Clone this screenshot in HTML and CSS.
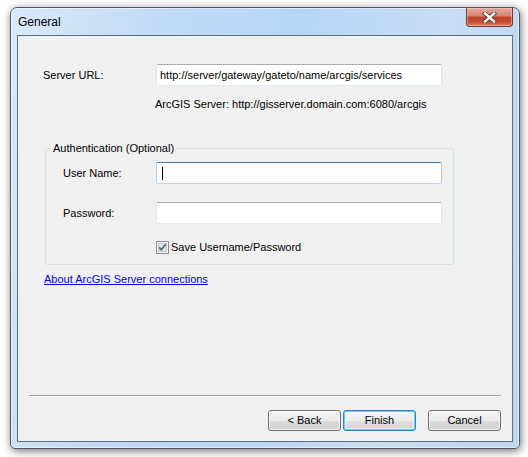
FILE: index.html
```html
<!DOCTYPE html>
<html>
<head>
<meta charset="utf-8">
<title>General</title>
<link rel="stylesheet" href="styles.css">
</head>
<body>
<div class="window">
  <div class="titlebar">
    <span class="title">General</span>
    <div class="close">
      <svg width="17" height="11" viewBox="0 0 17 11">
        <path d="M4 1.5 L13 9.5 M13 1.5 L4 9.5" stroke="#4a3a3a" stroke-width="4.2" stroke-linecap="square" fill="none"/>
        <path d="M4 1.5 L13 9.5 M13 1.5 L4 9.5" stroke="#ffffff" stroke-width="2.4" stroke-linecap="square" fill="none"/>
      </svg>
    </div>
  </div>
  <div class="client">
    <div class="content">
      <div class="row url-row">
        <span class="lbl">Server URL:</span>
        <div class="textbox">http://server/gateway/gateto/name/arcgis/services</div>
      </div>
      <div class="hint">ArcGIS Server: http://gisserver.domain.com:6080/arcgis</div>
      <fieldset class="group">
        <legend>Authentication (Optional)</legend>
        <div class="row grow user-row">
          <span class="lbl">User Name:</span>
          <div class="textbox focus"><span class="caret"></span></div>
        </div>
        <div class="row grow pass-row">
          <span class="lbl">Password:</span>
          <div class="textbox"></div>
        </div>
        <div class="check-row">
          <span class="checkbox">
            <svg width="13" height="13" viewBox="0 0 13 13">
              <rect x="0.5" y="0.5" width="12" height="12" fill="#f4f4f4" stroke="#8e8f8f"/>
              <rect x="2.5" y="2.5" width="8" height="8" fill="#e4e4e4" stroke="#c8c8c8"/>
              <path d="M3.2 6.4 L5.3 8.8 L9.8 3.2" stroke="#4c6286" stroke-width="1.7" fill="none"/>
            </svg>
          </span>
          <span class="check-label">Save Username/Password</span>
        </div>
      </fieldset>
      <a class="link" href="#">About ArcGIS Server connections</a>
    </div>
    <div class="footer">
      <div class="sep"></div>
      <div class="buttons">
        <div class="btn">&lt; Back</div>
        <div class="btn default">Finish</div>
        <div class="btn cancel">Cancel</div>
      </div>
    </div>
  </div>
</div>
</body>
</html>
```

FILE: styles.css
```css
html, body {
  margin: 0;
  padding: 0;
  background: #ffffff;
}

body {
  width: 528px;
  height: 457px;
  overflow: hidden;
  font-family: "Liberation Sans", Arial, sans-serif;
  font-size: 11px;
  color: #000;
}

.window {
  box-sizing: border-box;
  margin: 7px 0 0 10px;
  width: 510px;
  height: 442px;
  border: 1px solid #4e5864;
  border-radius: 7px 7px 5px 5px;
  background: linear-gradient(100deg, #d9e9f9 0%, #c1dbf6 25%, #b7d6f6 50%, #c6ddf4 75%, #bcd7f2 100%);
  box-shadow: inset 0 0 0 1px rgba(255, 255, 255, 0.55), 1px 2px 8px rgba(0, 0, 0, 0.55);
  display: flex;
  flex-direction: column;
}

.titlebar {
  height: 27px;
  display: flex;
  align-items: flex-start;
  flex-shrink: 0;
}

.title {
  font-family: "Liberation Sans", Arial, sans-serif;
  font-size: 12px;
  line-height: 14px;
  margin: 7px 0 0 7px;
  color: #000;
}

.close {
  margin-left: auto;
  margin-right: 6px;
  width: 47px;
  height: 19px;
  box-sizing: border-box;
  border: 1px solid #6e3a33;
  border-top: none;
  border-radius: 0 0 4px 4px;
  background: linear-gradient(#e7a99b 0%, #d98270 45%, #c0412a 50%, #c8492f 75%, #dc7b5e 100%);
  box-shadow: inset 0 0 0 1px rgba(255, 220, 210, 0.45);
  display: flex;
  align-items: center;
  justify-content: center;
}

.close svg {
  display: block;
  margin-top: 1px;
}

.client {
  box-sizing: border-box;
  flex: 1;
  margin: 0 6px 6px 6px;
  border: 1px solid #5f6f80;
  background: #f0f0f0;
  display: flex;
  flex-direction: column;
}

.content {
  padding-left: 25px;
  display: flex;
  flex-direction: column;
  align-items: flex-start;
}

.row {
  display: grid;
  grid-template-columns: 113px 286px;
  align-items: center;
}

.url-row {
  margin-top: 28px;
}

.lbl {
  line-height: 13px;
  padding-top: 1px;
}

.textbox {
  box-sizing: border-box;
  height: 22px;
  background: #fff;
  border: 1px solid #e2e3ea;
  border-top-color: #abadb3;
  border-bottom-color: #e3e9ef;
  border-radius: 2px;
  padding: 0 3px;
  line-height: 20px;
  white-space: nowrap;
  overflow: hidden;
  display: flex;
  align-items: center;
}

.textbox.focus {
  border-color: #b5cfe7;
  border-top-color: #3d7bad;
  border-bottom-color: #b7d9ed;
}

.caret {
  display: block;
  width: 1px;
  height: 13px;
  background: #000;
  margin-left: 2px;
}

.hint {
  margin-top: 12px;
  padding-left: 112px;
  line-height: 13px;
}

.group {
  box-sizing: border-box;
  margin: 31px 0 0 2px;
  width: 409px;
  padding: 0 0 10px 0;
  border: 1px solid #d5dfe5;
  border-radius: 3px;
  min-inline-size: 0;
}

.group legend {
  margin-left: 5px;
  padding: 0 2px;
  line-height: 13px;
}

.grow {
  grid-template-columns: 93px 286px;
  padding-left: 17px;
}

.user-row {
  margin-top: 7px;
}

.pass-row {
  margin-top: 18px;
}

.check-row {
  margin-top: 17px;
  padding-left: 110px;
  display: flex;
  align-items: center;
  gap: 2px;
}

.checkbox {
  display: block;
  width: 13px;
  height: 13px;
}

.checkbox svg {
  display: block;
}

.check-label {
  line-height: 13px;
}

.link {
  margin: 8px 0 0 1px;
  color: #0000ff;
  text-decoration: underline;
  line-height: 13px;
}

.footer {
  margin-top: auto;
  padding: 0 11px 10px 11px;
}

.sep {
  height: 1px;
  background: #a0a0a0;
  border-bottom: 1px solid #ffffff;
}

.buttons {
  margin-top: 13px;
  display: flex;
  justify-content: flex-end;
}

.btn {
  box-sizing: border-box;
  width: 73px;
  height: 21px;
  border: 1px solid #707070;
  border-radius: 3px;
  background: linear-gradient(#f2f2f2 0%, #ebebeb 50%, #dddddd 51%, #cfcfcf 100%);
  box-shadow: inset 0 0 0 1px rgba(255, 255, 255, 0.75);
  text-align: center;
  line-height: 19px;
}

.btn.default {
  margin-left: 2px;
  border-color: #3c7fb1;
  box-shadow: inset 0 0 0 1px #48d8fb, inset 0 0 0 2px rgba(255, 255, 255, 0.5);
  background: linear-gradient(#f3f3f3 0%, #ececec 50%, #e0e0e0 51%, #d4d4d4 100%);
}

.btn.cancel {
  margin-left: 12px;
}
```
